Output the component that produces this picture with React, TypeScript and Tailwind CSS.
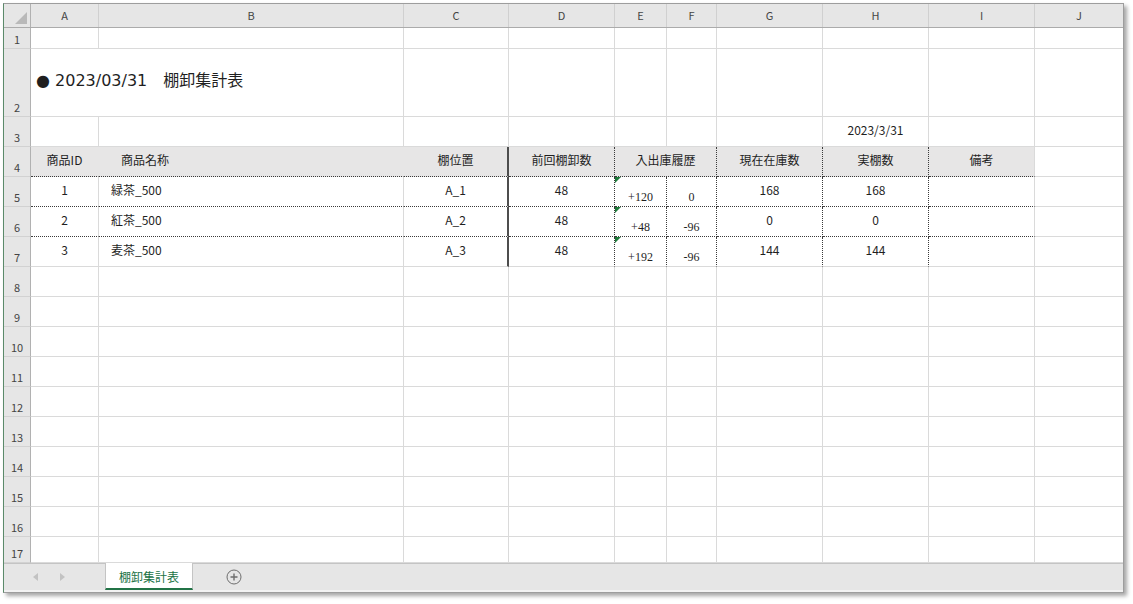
import type { ReactNode } from "react";

const FONT = "font-['Noto_Sans_CJK_JP','Noto_Sans',sans-serif]";
const COLS =
  "grid grid-cols-[27px_68px_305px_105px_106px_52px_50px_106px_106px_106px_88px]";

const GRID_R = "border-r border-r-[#dadada]";
const GRID_B = "border-b border-b-[#dadada]";
const DOT_R = "border-r border-r-[#3a3a3a] [border-right-style:dotted]";
const DOT_B = "border-b border-b-[#3a3a3a] [border-bottom-style:dotted]";
const THICK_R = "border-r-2 border-r-[#4d4d4d]";
const FILL_R = "border-r border-r-[#e7e6e6]";

const LETTERS = ["A", "B", "C", "D", "E", "F", "G", "H", "I", "J"];

const ROW_HEIGHTS: Record<number, string> = {
  1: "h-[21px]",
  2: "h-[68px]",
  17: "h-[26px]",
};

type Item = {
  name: string;
  place: string;
  prev: string;
  inbound: string;
  outbound: string;
  stock: string;
  actual: string;
};

const items: Item[] = [
  { name: "緑茶_500", place: "A_1", prev: "48", inbound: "+120", outbound: "0", stock: "168", actual: "168" },
  { name: "紅茶_500", place: "A_2", prev: "48", inbound: "+48", outbound: "-96", stock: "0", actual: "0" },
  { name: "麦茶_500", place: "A_3", prev: "48", inbound: "+192", outbound: "-96", stock: "144", actual: "144" },
];

function RowHeader({ n }: { n: number }) {
  return (
    <div className="flex items-end justify-center border-r border-b border-r-[#b1b1b1] border-b-[#d2d2d2] bg-[#e6e6e6] pb-[2px] text-[11px] leading-[14px] text-[#444]">
      {n}
    </div>
  );
}

function Cell({
  className = "",
  children,
}: {
  className?: string;
  children?: ReactNode;
}) {
  return (
    <div className={`flex items-center pb-[4px] text-[12px] text-[#1f1f1f] ${className}`}>
      {children}
    </div>
  );
}

function GreenMark() {
  return (
    <span className="absolute top-0 left-0 h-0 w-0 border-t-[6px] border-r-[6px] border-t-[#1e7b3a] border-r-transparent" />
  );
}

function ColumnHeader() {
  return (
    <div className={`${COLS} h-[24px] border-b border-b-[#ababab] bg-[#e6e6e6] text-[11px] text-[#444]`}>
      <div className="relative border-r border-r-[#b1b1b1]">
        <svg className="absolute right-[3px] bottom-[3px]" width="12" height="12" viewBox="0 0 12 12">
          <path d="M12 0 L12 12 L0 12 Z" fill="#b9b9b9" />
        </svg>
      </div>
      {LETTERS.map((l, i) => (
        <div
          key={l}
          className={`flex items-center justify-center ${i < 9 ? "border-r border-r-[#d0d0d0]" : ""}`}
        >
          {l}
        </div>
      ))}
    </div>
  );
}

function PlainRow({ n, children }: { n: number; children?: ReactNode }) {
  return (
    <div className={`${COLS} ${ROW_HEIGHTS[n] ?? "h-[30px]"}`}>
      <RowHeader n={n} />
      {children ??
        LETTERS.map((l, i) => (
          <Cell key={l} className={`${i < 9 ? GRID_R : ""} ${GRID_B}`} />
        ))}
    </div>
  );
}

function TableHeaderRow() {
  const hd = "justify-center bg-[#e7e6e6]";
  return (
    <div className={`${COLS} h-[30px]`}>
      <RowHeader n={4} />
      <Cell className={`${hd} ${FILL_R} ${DOT_B}`}>商品ID</Cell>
      <Cell className={`bg-[#e7e6e6] pl-[22px] ${FILL_R} ${DOT_B}`}>商品名称</Cell>
      <Cell className={`${hd} ${THICK_R} ${DOT_B}`}>棚位置</Cell>
      <Cell className={`${hd} ${DOT_R} ${DOT_B}`}>前回棚卸数</Cell>
      <Cell className={`${hd} col-span-2 ${DOT_R} ${DOT_B}`}>入出庫履歴</Cell>
      <Cell className={`${hd} ${DOT_R} ${DOT_B}`}>現在在庫数</Cell>
      <Cell className={`${hd} ${DOT_R} ${DOT_B}`}>実棚数</Cell>
      <Cell className={`${hd} ${GRID_R} ${DOT_B}`}>備考</Cell>
      <Cell className={GRID_B} />
    </div>
  );
}

function ItemRow({ n, index, item }: { n: number; index: number; item: Item }) {
  const last = index === items.length - 1;
  const b = last ? GRID_B : DOT_B;
  // 入出庫の数値は文字列として入力されているので明朝・下寄せ
  const serif =
    "items-end justify-center !pb-[1px] font-['Liberation_Serif',serif] text-[12px] leading-[16px]";
  return (
    <div className={`${COLS} h-[30px]`}>
      <RowHeader n={n} />
      <Cell className={`justify-center ${GRID_R} ${b}`}>{index + 1}</Cell>
      <Cell className={`pl-[12px] ${GRID_R} ${b}`}>{item.name}</Cell>
      <Cell className={`justify-center ${THICK_R} ${b}`}>{item.place}</Cell>
      <Cell className={`justify-center ${DOT_R} ${b}`}>{item.prev}</Cell>
      <Cell className={`relative ${serif} ${DOT_R} ${b}`}>
        <GreenMark />
        {item.inbound}
      </Cell>
      <Cell className={`${serif} ${DOT_R} ${b}`}>{item.outbound}</Cell>
      <Cell className={`justify-center ${DOT_R} ${b}`}>{item.stock}</Cell>
      <Cell className={`justify-center ${DOT_R} ${b}`}>{item.actual}</Cell>
      <Cell className={`${GRID_R} ${b}`} />
      <Cell className={GRID_B} />
    </div>
  );
}

function SheetTabs() {
  return (
    <div className="flex h-[27px] border-t border-t-[#c4c4c4] bg-[#e6e6e6]">
      <div className="flex w-[101px] items-center gap-[22px] pl-[29px]">
        <svg width="5" height="8" viewBox="0 0 5 8">
          <path d="M5 0 L0 4 L5 8 Z" fill="#c2c2c2" />
        </svg>
        <svg width="5" height="8" viewBox="0 0 5 8">
          <path d="M0 0 L5 4 L0 8 Z" fill="#c2c2c2" />
        </svg>
      </div>
      <div className="-mt-px flex w-[88px] items-center justify-center border-x border-x-[#c4c4c4] border-b-2 border-b-[#217346] bg-white pt-[2px] text-[12px] text-[#217346]">
        棚卸集計表
      </div>
      <div className="flex items-center pl-[33px]">
        <svg width="16" height="16" viewBox="0 0 16 16" fill="none" stroke="#6e6e6e" strokeWidth="1">
          <circle cx="8" cy="8" r="7" />
          <path d="M8 4.5 V11.5 M4.5 8 H11.5" strokeWidth="1.4" />
        </svg>
      </div>
    </div>
  );
}

export default function App() {
  return (
    <div className={`min-h-[604px] w-[1133px] bg-white pt-[3px] pl-[3px] ${FONT}`}>
      <div className="w-[1121px] overflow-hidden border border-[#9d9d9d] border-l-[#5b8a6a] bg-white shadow-[3px_3px_4px_rgba(0,0,0,0.35)]">
        <ColumnHeader />
        <PlainRow n={1} />
        <PlainRow n={2}>
          <Cell
            className={`whitespace-nowrap pl-[5px] font-['DejaVu_Sans','Noto_Sans_CJK_JP',sans-serif] text-[16px] ${GRID_B}`}
          >
            ● 2023/03/31　棚卸集計表
          </Cell>
          {LETTERS.slice(1).map((l, i) => (
            <Cell key={l} className={`${i < 8 ? GRID_R : ""} ${GRID_B}`} />
          ))}
        </PlainRow>
        <PlainRow n={3}>
          {LETTERS.map((l, i) => (
            <Cell
              key={l}
              className={`${l === "H" ? "justify-center" : ""} ${i < 9 ? GRID_R : ""} ${GRID_B}`}
            >
              {l === "H" ? "2023/3/31" : null}
            </Cell>
          ))}
        </PlainRow>
        <TableHeaderRow />
        {items.map((item, i) => (
          <ItemRow key={item.name} n={5 + i} index={i} item={item} />
        ))}
        {[8, 9, 10, 11, 12, 13, 14, 15, 16, 17].map((n) => (
          <PlainRow key={n} n={n} />
        ))}
        <SheetTabs />
        <div className="h-[2px] bg-[#f2f2f2]" />
      </div>
    </div>
  );
}
